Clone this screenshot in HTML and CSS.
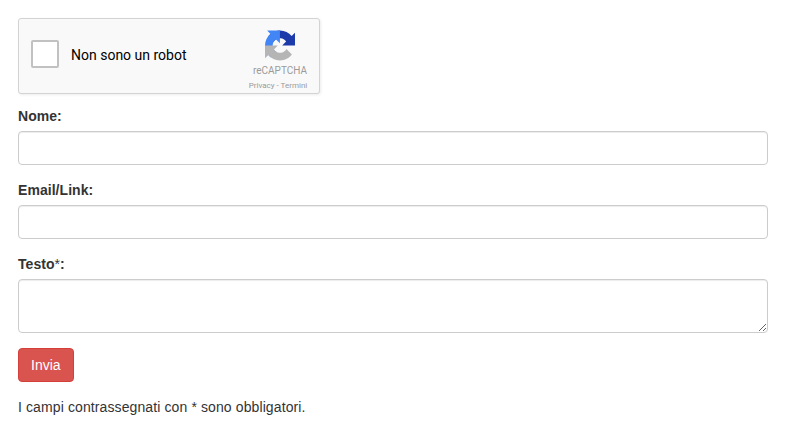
FILE: index.html
```html
<!DOCTYPE html>
<html lang="it">
<head>
    <meta charset="UTF-8">
    <meta name="viewport" content="width=device-width, initial-scale=1.0">
    <title>Scrivi un commento</title>
    <link rel="stylesheet" href="styles.css">
</head>
<body>
    <form class="comment-form">
        <div class="captcha">
            <label class="captcha-check">
                <input type="checkbox" class="captcha-box">
                <span>Non sono un robot</span>
            </label>
            <div class="captcha-brand">
                <svg class="captcha-logo" viewBox="0 0 64 64">
                    <path fill="#1c3aa9" d="M64 31.955l-.033-1.37V4.687l-7.16 7.16C50.948 4.674 42.033.093 32.05.093c-10.4 0-19.622 4.96-25.458 12.64l11.736 11.86a15.55 15.55 0 0 1 4.754-5.334c2.05-1.6 4.952-2.906 8.968-2.906.485 0 .86.057 1.135.163 4.976.393 9.288 3.14 11.828 7.124l-8.307 8.307L64 31.953"/>
                    <path fill="#4285f4" d="M31.862.094l-1.37.033H4.594l7.16 7.16C4.58 13.147 0 22.06 0 32.046c0 10.4 4.96 19.622 12.64 25.458L24.5 45.768a15.55 15.55 0 0 1-5.334-4.754c-1.6-2.05-2.906-4.952-2.906-8.968 0-.485.057-.86.163-1.135.393-4.976 3.14-9.288 7.124-11.828l8.307 8.307L31.86.095"/>
                    <path fill="#b5b5b5" d="M.001 32.045l.033 1.37v25.898l7.16-7.16c5.86 7.173 14.774 11.754 24.76 11.754 10.4 0 19.622-4.96 25.458-12.64l-11.736-11.86a15.55 15.55 0 0 1-4.754 5.334c-2.05 1.6-4.952 2.906-8.968 2.906-.485 0-.86-.057-1.135-.163-4.976-.393-9.288-3.14-11.828-7.124l8.307-8.307c-10.522.04-22.4.066-27.295-.005"/>
                </svg>
                <div class="captcha-name">reCAPTCHA</div>
                <div class="captcha-links"><a>Privacy</a> - <a>Termini</a></div>
            </div>
        </div>
        <div class="form-group">
            <label for="nome">Nome:</label>
            <input type="text" class="form-control" id="nome">
        </div>
        <div class="form-group">
            <label for="email">Email/Link:</label>
            <input type="text" class="form-control" id="email">
        </div>
        <div class="form-group">
            <label for="testo">Testo<span class="required">*</span>:</label>
            <textarea class="form-control" id="testo" rows="2"></textarea>
        </div>
        <button type="button" class="btn">Invia</button>
        <p class="note">I campi contrassegnati con * sono obbligatori.</p>
    </form>
</body>
</html>
```

FILE: styles.css
```css
* {
    box-sizing: border-box;
}
body {
    margin: 0;
    font-family: "Liberation Sans", Arial, sans-serif;
    font-size: 14px;
    line-height: 20px;
    color: #333;
    background: #fff;
    overflow: hidden;
}
.comment-form {
    width: 750px;
    margin: 18px 0 0 18px;
}

/* captcha */
.captcha {
    display: flex;
    justify-content: space-between;
    width: 302px;
    height: 76px;
    margin-bottom: 12px;
    border: 1px solid #d3d3d3;
    border-radius: 3px;
    background: #f9f9f9;
    box-shadow: 1px 1px 3px rgba(0, 0, 0, 0.08);
    font-family: Roboto, sans-serif;
}
.captcha-check {
    display: flex;
    align-items: center;
    gap: 12px;
    height: 70px;
    padding-left: 12px;
    color: #000;
}
.captcha-check span {
    padding-top: 2px;
}
.captcha-box {
    appearance: none;
    width: 28px;
    height: 28px;
    margin: 0;
    border: 2px solid #c1c1c1;
    border-radius: 2px;
    background: #fff;
}
.captcha-brand {
    width: 80px;
    padding-top: 11px;
    text-align: center;
    color: #9b9b9b;
}
.captcha-logo {
    display: block;
    width: 30px;
    height: 31px;
    margin: 0 0 0 26px;
}
.captcha-name {
    margin-top: 4px;
    padding-left: 2px;
    font-size: 10px;
    line-height: 12px;
}
.captcha-links {
    margin-top: 4px;
    padding-right: 2px;
    font-size: 8px;
    line-height: 10px;
}

/* fields */
.form-group {
    margin-bottom: 15px;
}
.form-group label {
    display: block;
    margin-bottom: 5px;
    font-weight: bold;
    letter-spacing: 0.05px;
}
.required {
    font-weight: normal;
}
.form-control {
    display: block;
    width: 100%;
    height: 34px;
    padding: 6px 12px;
    border: 1px solid #ccc;
    border-radius: 4px;
    box-shadow: inset 0 1px 1px rgba(0, 0, 0, 0.075);
    font: inherit;
    color: #555;
}
textarea.form-control {
    height: 54px;
    overflow: auto;
}
.btn {
    display: block;
    height: 34px;
    padding: 6px 12px;
    border: 1px solid #d43f3a;
    border-radius: 4px;
    background: #d9534f;
    font: inherit;
    color: #fff;
}
.note {
    margin: 15px 0 0;
    letter-spacing: 0.11px;
}
```
